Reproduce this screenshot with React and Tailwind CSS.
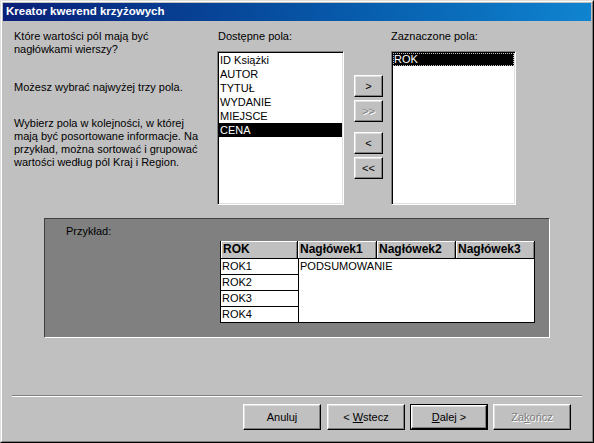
import React from 'react';

const font = "font-['Liberation_Sans',Arial,sans-serif]";
const raised = 'border border-t-white border-l-white border-r-black border-b-black shadow-[inset_-1px_-1px_#808080,inset_1px_1px_#dfdfdf] bg-[#c0c0c0]';
const sunken = 'border border-t-[#808080] border-l-[#808080] border-r-white border-b-white shadow-[inset_1px_1px_#000,inset_-1px_-1px_#dfdfdf] bg-white';

const available = ['ID Książki', 'AUTOR', 'TYTUŁ', 'WYDANIE', 'MIEJSCE', 'CENA'];

const MoveButton = ({ label, disabled, className = '' }) => (
  <div className={`${raised} w-[29px] h-[22px] flex items-center justify-center text-[11px] ${className}`}>
    <span className={disabled ? 'text-[#808080] [text-shadow:1px_1px_0_#fff]' : 'text-black'}>{label}</span>
  </div>
);

const WizardButton = ({ children, disabled, isDefault, className = '' }) => {
  const inner = (
    <div className={`${raised} h-full w-full flex items-center justify-center text-[11px] ${disabled ? 'text-[#808080] [text-shadow:1px_1px_0_#fff]' : 'text-black'}`}>
      {children}
    </div>
  );
  if (isDefault) {
    return <div className={`w-[78px] h-[26px] border border-black ${className}`}>{inner}</div>;
  }
  return <div className={`w-[78px] h-[26px] ${className}`}>{inner}</div>;
};

export default function App() {
  return (
    <div className={`${font} w-[594px] h-[443px] bg-[#c0c0c0] border border-t-[#dfdfdf] border-l-[#dfdfdf] border-r-black border-b-black text-black`}>
      <div className="h-full w-full border border-t-white border-l-white border-r-[#808080] border-b-[#808080] flex flex-col">
        {/* Title bar */}
        <div className="mx-[1px] mt-[1px] h-[18px] bg-gradient-to-r from-[#0a1f78] to-[#1084d0] flex items-center pl-[3px]">
          <span className="text-white font-bold text-[11.5px] leading-none">Kreator kwerend krzyżowych</span>
        </div>

        {/* Top section */}
        <div className="flex text-[11px] leading-[13px]">
          <div className="ml-[12px] w-[203px] pt-[9px]">
            <p>Które wartości pól mają być<br />nagłówkami wierszy?</p>
            <p className="mt-[25px]">Możesz wybrać najwyżej trzy pola.</p>
            <p className="mt-[23px]">
              Wybierz pola w kolejności, w której<br />
              mają być posortowane informacje. Na<br />
              przykład, można sortować i grupować<br />
              wartości według pól Kraj i Region.
            </p>
          </div>

          <div className="w-[127px] pt-[9px]">
            <div className="pl-[1px]">Dostępne pola:</div>
            <div className={`${sunken} mt-[8px] h-[154px] p-[1px]`}>
              {available.map((f) => (
                <div
                  key={f}
                  className={`h-[14px] leading-[14px] pl-[1px] ${f === 'CENA' ? 'bg-black text-white' : ''}`}
                >
                  {f}
                </div>
              ))}
            </div>
          </div>

          <div className="ml-[10px] w-[29px] pt-[54px] flex flex-col">
            <MoveButton label=">" />
            <MoveButton label=">>" disabled className="mt-[3px]" />
            <MoveButton label="<" className="mt-[10px]" />
            <MoveButton label="<<" className="mt-[3px]" />
          </div>

          <div className="ml-[8px] w-[125px] pt-[9px]">
            <div>Zaznaczone pola:</div>
            <div className={`${sunken} mt-[8px] h-[154px] p-[1px]`}>
              <div className="h-[13px] leading-[11px] bg-black text-white border border-dotted border-[#c0c0c0]">ROK</div>
            </div>
          </div>
        </div>

        {/* Example panel */}
        <div className="ml-[42px] mt-[13px] w-[506px] h-[120px] bg-[#808080] border border-t-[#404040] border-l-[#404040] border-r-white border-b-white text-[11px]">
          <div className="pl-[21px] pt-[6px] leading-[13px]">Przykład:</div>
          <div className="ml-[175px] mt-[3px]">
            <div className="flex">
              <div className="w-[78px] h-[17px] bg-[#c0c0c0] border-l border-r border-black shadow-[inset_1px_1px_#fff,inset_-1px_0_#808080] font-bold text-[12px] leading-[17px] pl-[2px]">ROK</div>
              {['Nagłówek1', 'Nagłówek2', 'Nagłówek3'].map((h) => (
                <div key={h} className="w-[79px] h-[17px] bg-[#c0c0c0] border-r border-black shadow-[inset_1px_1px_#fff,inset_-1px_0_#808080] font-bold text-[12px] leading-[17px] pl-[2px]">
                  {h}
                </div>
              ))}
            </div>
            <div className="flex">
              <div className="w-[78px] border-l border-t border-black bg-white">
                {['ROK1', 'ROK2', 'ROK3', 'ROK4'].map((r) => (
                  <div key={r} className="h-[16px] border-b border-black leading-[15px] pl-[1px]">{r}</div>
                ))}
              </div>
              <div className="w-[237px] h-[65px] border border-black bg-white leading-[15px] pl-[1px]">PODSUMOWANIE</div>
            </div>
          </div>
        </div>

        {/* Separator */}
        <div className="mx-[10px] mt-[57px] h-[2px] border-t border-t-[#808080] border-b border-b-white" />

        {/* Buttons */}
        <div className="flex mt-[7px] pl-[241px]">
          <WizardButton>Anuluj</WizardButton>
          <WizardButton className="ml-[6px]">&lt; <span className="underline ml-[3px]">W</span>stecz</WizardButton>
          <WizardButton isDefault className="ml-[5px]"><span className="underline">D</span>alej &gt;</WizardButton>
          <WizardButton disabled className="ml-[5px]">Za<span className="underline">k</span>ończ</WizardButton>
        </div>
      </div>
    </div>
  );
}
